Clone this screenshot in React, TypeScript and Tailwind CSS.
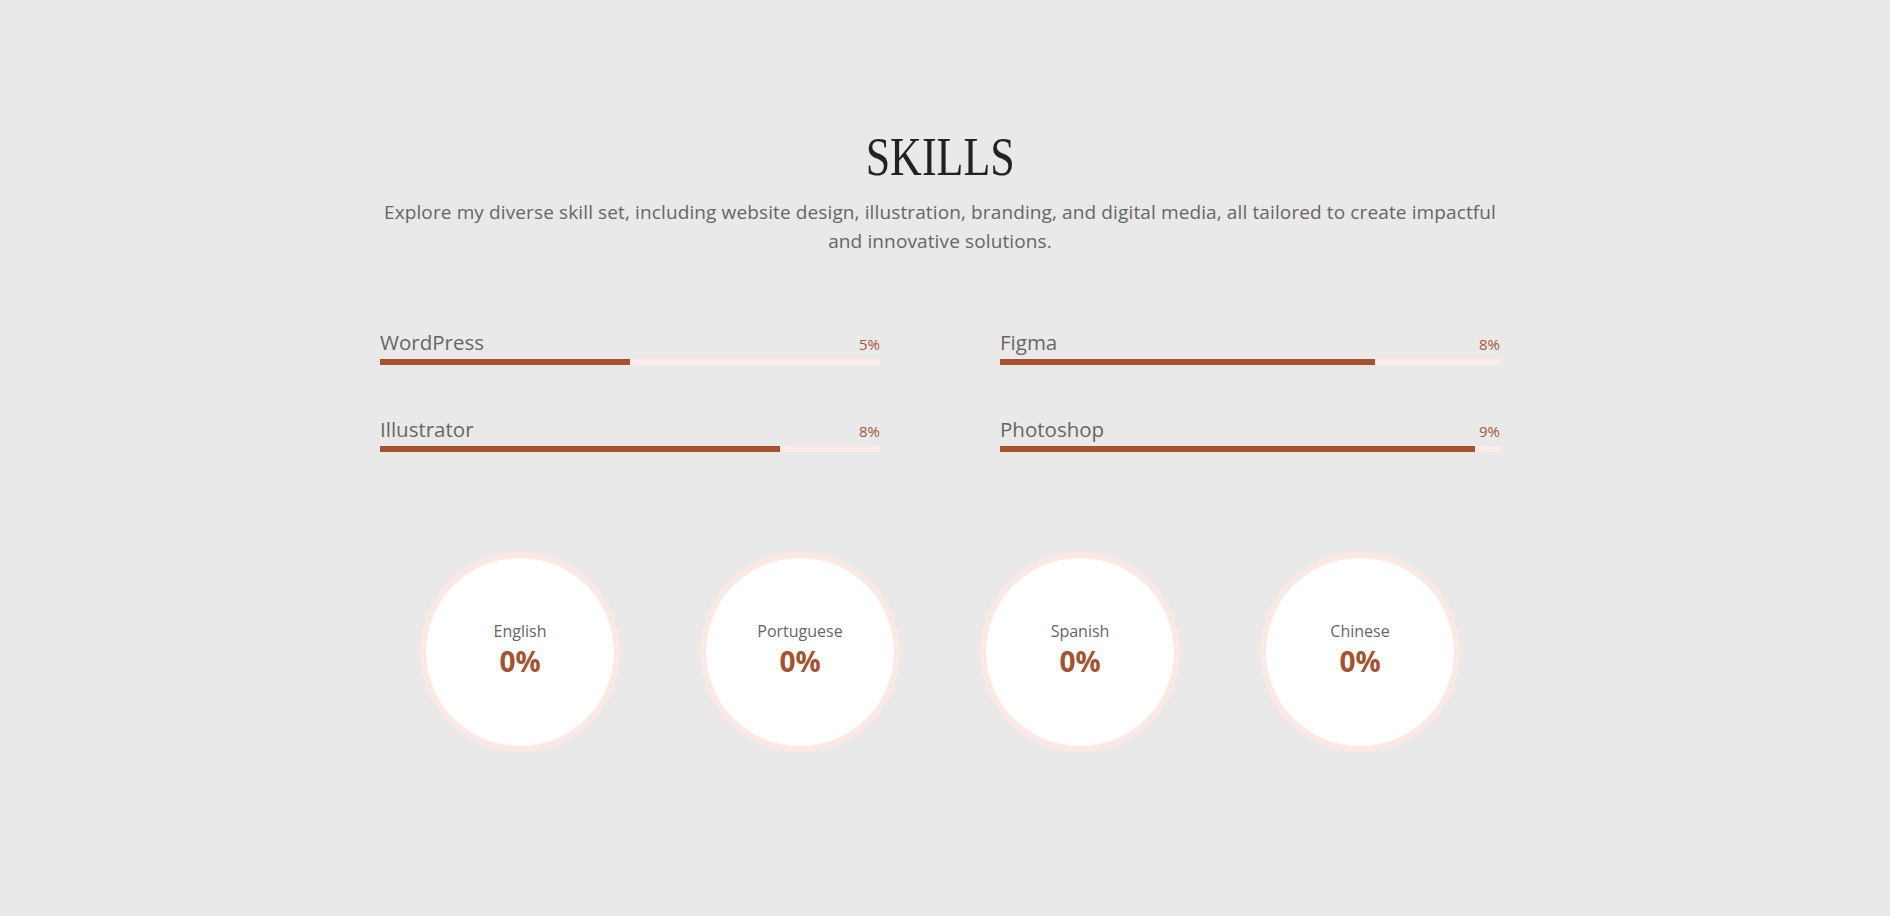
import React from 'react';

type Skill = { name: string; label: string; value: number };

const skills: Skill[] = [
	{ name: 'WordPress', label: '5%', value: 50 },
	{ name: 'Figma', label: '8%', value: 75 },
	{ name: 'Illustrator', label: '8%', value: 80 },
	{ name: 'Photoshop', label: '9%', value: 95 },
];

const languages = ['English', 'Portuguese', 'Spanish', 'Chinese'];

function SkillBar({ name, label, value }: Skill) {
	return (
		<div className="flex flex-col">
			<div className="flex items-baseline justify-between">
				<span className="text-[20.5px] leading-[30px] text-[#666]">{name}</span>
				<span className="text-[15px] leading-[20px] text-[#a5583a]">{label}</span>
			</div>
			<div className="mt-[2px] h-[6px] w-full bg-[#fdebe6]">
				<div className="h-full bg-[#a5532f]" style={{ width: `${value}%` }} />
			</div>
		</div>
	);
}

function LanguageCircle({ name }: { name: string }) {
	return (
		<div className="flex justify-center">
			<div className="flex h-[200px] w-[200px] flex-col items-center justify-center rounded-full border-[6px] border-[#fce8e3] bg-white pb-[5px]">
				<span className="text-[16px] leading-[24px] text-[#666]">{name}</span>
				<span className="text-[28px] leading-[37px] font-bold text-[#a5532f]">0%</span>
			</div>
		</div>
	);
}

export default function App() {
	return (
		<div className="min-h-screen bg-[#eae9e9] pr-[10px] font-['Open_Sans',sans-serif]">
			<section className="mx-auto flex w-[1120px] flex-col items-center pt-[125px] pb-[160px]">
				<h2 className="scale-x-[0.8] font-['Liberation_Serif',serif] text-[55px] leading-[64px] font-normal text-[#222]">
					SKILLS
				</h2>
				<p className="mt-[9px] text-center text-[19px] leading-[29px] tracking-[0.12px] text-[#666]">
					Explore my diverse skill set, including website design, illustration, branding, and digital media, all tailored to
					create impactful and innovative solutions.
				</p>

				<div className="mt-[71px] grid w-full grid-cols-2 gap-x-[120px] gap-y-[49px]">
					{skills.map((s) => (
						<SkillBar key={s.name} {...s} />
					))}
				</div>

				<div className="mt-[100px] grid w-full grid-cols-4">
					{languages.map((l) => (
						<LanguageCircle key={l} name={l} />
					))}
				</div>
			</section>
		</div>
	);
}
